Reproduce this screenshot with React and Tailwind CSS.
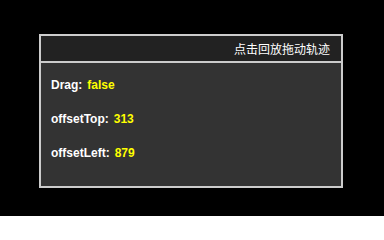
import React from "react";

const rows = [
  { label: "Drag:", value: "false" },
  { label: "offsetTop:", value: "313" },
  { label: "offsetLeft:", value: "879" },
];

const App = () => {
  return (
    <div className="w-[384px] h-[216px] bg-black pt-[34px] pl-[39px]">
      <div className="w-[304px] h-[154px] border-2 border-[#cccccc] flex flex-col">
        <div className="h-[27px] shrink-0 bg-[#222222] border-b-2 border-[#cccccc] flex items-center justify-end pr-[11px]">
          <p
            className="text-[12px] leading-[14px] text-white"
            style={{ fontFamily: '"Noto Sans CJK SC", sans-serif' }}
          >
            点击回放拖动轨迹
          </p>
        </div>
        <div
          className="flex-1 bg-[#333333] pl-[10px] pt-[15px] flex flex-col gap-[20px]"
          style={{ fontFamily: '"Liberation Sans", Arial, sans-serif' }}
        >
          {rows.map((row) => (
            <p key={row.label} className="text-[12px] leading-[14px] font-bold text-white">
              {row.label}
              <span className="ml-[5px] text-[#ffff00]">{row.value}</span>
            </p>
          ))}
        </div>
      </div>
    </div>
  );
};

export default App;
